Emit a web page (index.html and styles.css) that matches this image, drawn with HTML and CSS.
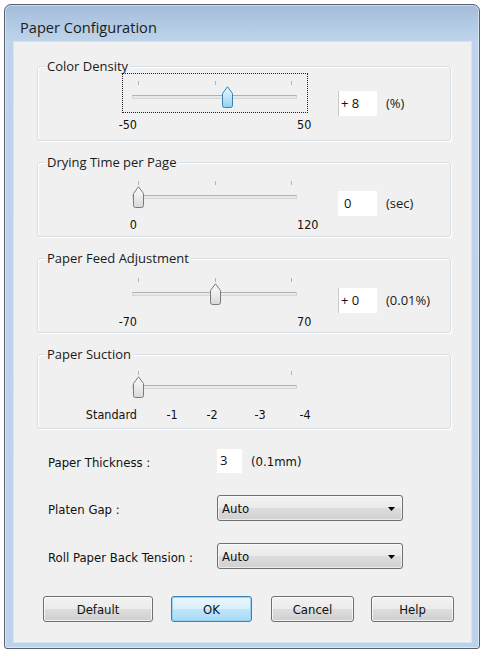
FILE: index.html
```html
<!DOCTYPE html>
<html>
<head>
<meta charset="utf-8">
<link rel="stylesheet" href="styles.css">
</head>
<body>
<div class="window">
  <div class="titlebar">Paper Configuration</div>
  <div class="client">

    <div class="group g1">
      <span class="legend">Color Density</span>
      <div class="row">
        <div class="slider-col">
          <div class="slider focus">
            <div class="ticks"><i></i><i></i><i></i></div>
            <div class="track"></div>
            <svg class="thumb" style="left:calc(15px + 0.58 * 153px - 5px)" width="11" height="22" viewBox="0 0 11 22">
              <defs><linearGradient id="tb1" x1="0" y1="0" x2="0" y2="1"><stop offset="0" stop-color="#e9f6fd"/><stop offset="0.5" stop-color="#bfe6fa"/><stop offset="1" stop-color="#8fd0f2"/></linearGradient></defs>
              <path d="M0.5 7.5 L5.5 0.8 L10.5 7.5 V19.5 Q10.5 21.5 8.5 21.5 H2.5 Q0.5 21.5 0.5 19.5 Z" fill="url(#tb1)" stroke="#3c7fb1"/>
            </svg>
          </div>
          <div class="scale"><span class="lo">-50</span><span class="hi">50</span></div>
        </div>
        <div class="edit signed">+ 8</div>
        <span class="unit">(%)</span>
      </div>
    </div>

    <div class="group g2">
      <span class="legend">Drying Time per Page</span>
      <div class="row">
        <div class="slider-col">
          <div class="slider">
            <div class="ticks"><i></i><i></i><i></i></div>
            <div class="track"></div>
            <svg class="thumb" style="left:calc(15px + 0 * 153px - 5px)" width="11" height="22" viewBox="0 0 11 22">
              <defs><linearGradient id="tb2" x1="0" y1="0" x2="0" y2="1"><stop offset="0" stop-color="#fafafa"/><stop offset="0.5" stop-color="#ececec"/><stop offset="1" stop-color="#d8d8d8"/></linearGradient></defs>
              <path d="M0.5 7.5 L5.5 0.8 L10.5 7.5 V19.5 Q10.5 21.5 8.5 21.5 H2.5 Q0.5 21.5 0.5 19.5 Z" fill="url(#tb2)" stroke="#7a7a7a"/>
            </svg>
          </div>
          <div class="scale"><span class="lo">0</span><span class="hi">120</span></div>
        </div>
        <div class="edit plain">0</div>
        <span class="unit">(sec)</span>
      </div>
    </div>

    <div class="group g3">
      <span class="legend">Paper Feed Adjustment</span>
      <div class="row">
        <div class="slider-col">
          <div class="slider">
            <div class="ticks"><i></i><i></i><i></i></div>
            <div class="track"></div>
            <svg class="thumb" style="left:calc(15px + 0.5 * 153px - 5px)" width="11" height="22" viewBox="0 0 11 22">
              <defs><linearGradient id="tb3" x1="0" y1="0" x2="0" y2="1"><stop offset="0" stop-color="#fafafa"/><stop offset="0.5" stop-color="#ececec"/><stop offset="1" stop-color="#d8d8d8"/></linearGradient></defs>
              <path d="M0.5 7.5 L5.5 0.8 L10.5 7.5 V19.5 Q10.5 21.5 8.5 21.5 H2.5 Q0.5 21.5 0.5 19.5 Z" fill="url(#tb3)" stroke="#7a7a7a"/>
            </svg>
          </div>
          <div class="scale"><span class="lo">-70</span><span class="hi">70</span></div>
        </div>
        <div class="edit signed">+ 0</div>
        <span class="unit">(0.01%)</span>
      </div>
    </div>

    <div class="group g4">
      <span class="legend">Paper Suction</span>
      <div class="row">
        <div class="slider-col">
          <div class="slider">
            <div class="ticks"><i></i><i></i></div>
            <div class="track"></div>
            <svg class="thumb" style="left:calc(15px + 0 * 153px - 5px)" width="11" height="22" viewBox="0 0 11 22">
              <defs><linearGradient id="tb4" x1="0" y1="0" x2="0" y2="1"><stop offset="0" stop-color="#fafafa"/><stop offset="0.5" stop-color="#ececec"/><stop offset="1" stop-color="#d8d8d8"/></linearGradient></defs>
              <path d="M0.5 7.5 L5.5 0.8 L10.5 7.5 V19.5 Q10.5 21.5 8.5 21.5 H2.5 Q0.5 21.5 0.5 19.5 Z" fill="url(#tb4)" stroke="#7a7a7a"/>
            </svg>
          </div>
          <div class="scale suction">
            <span class="std">Standard</span><span class="s1">-1</span><span class="s2">-2</span><span class="s3">-3</span><span class="s4">-4</span>
          </div>
        </div>
      </div>
    </div>

    <div class="field thick">
      <span class="flabel">Paper Thickness :</span>
      <div class="edit small">3</div>
      <span class="funit">(0.1mm)</span>
    </div>

    <div class="field combo-row first">
      <span class="flabel">Platen Gap :</span>
      <div class="combo"><span>Auto</span><svg width="7" height="4" viewBox="0 0 7 4"><path d="M0 0 H7 L3.5 4 Z" fill="#000"/></svg></div>
    </div>

    <div class="field combo-row">
      <span class="flabel">Roll Paper Back Tension :</span>
      <div class="combo"><span>Auto</span><svg width="7" height="4" viewBox="0 0 7 4"><path d="M0 0 H7 L3.5 4 Z" fill="#000"/></svg></div>
    </div>

    <div class="buttons">
      <div class="btn wide">Default</div>
      <div class="btn default">OK</div>
      <div class="btn cancel">Cancel</div>
      <div class="btn help">Help</div>
    </div>

  </div>
</div>
</body>
</html>
```

FILE: styles.css
```css
html, body {
  margin: 0;
  padding: 0;
  background: #ffffff;
}
body {
  width: 484px;
  height: 654px;
  overflow: hidden;
  font-family: "DejaVu Sans Condensed", "DejaVu Sans", sans-serif;
  font-stretch: condensed;
  font-size: 12px;
  color: #000;
}
.window {
  margin: 4px 0 0 4px;
  width: 476px;
  height: 645px;
  box-sizing: border-box;
  border: 1px solid #56606c;
  border-radius: 7px 7px 3px 3px;
  background: linear-gradient(#a3bcda 0px, #b3cae4 20px, #bed4ec 37px, #bcd3eb 100%);
  box-shadow: inset 0 0 0 1px rgba(255,255,255,0.45);
  padding: 0 8px 6px 9px;
  display: flex;
  flex-direction: column;
}
.titlebar {
  height: 37px;
  box-sizing: border-box;
  padding: 6px 0 0 6px;
  display: flex;
  align-items: center;
  font-family: "Open Sans", "Noto Sans", sans-serif;
  font-stretch: normal;
  font-size: 14.6px;
  color: #1b1b1b;
}
.client {
  flex: 1;
  background: #f0f0f0;
  box-shadow: 0 0 0 1px #d7e3f1;
  padding: 24px 20px 0 23px;
  display: flex;
  flex-direction: column;
}
.group {
  position: relative;
  height: 75px;
  box-sizing: border-box;
  border: 1px solid #d5dfe5;
  border-radius: 3px;
  box-shadow: inset 1px 1px 0 #ffffff, 1px 1px 0 #ffffff;
  margin-bottom: 21px;
}
.g1 { padding-top: 6px; }
.g2 { padding-top: 10px; }
.g3 { padding-top: 11px; }
.g4 { padding-top: 8px; margin-bottom: 0; }
.legend {
  position: absolute;
  top: -10px;
  left: 8px;
  padding: 0 2px 0 1px;
  background: #f0f0f0;
  font-family: "Open Sans", "Noto Sans", sans-serif;
  font-stretch: normal;
  font-size: 13px;
  line-height: 18px;
  color: #1a1a1a;
}
.row {
  display: flex;
  align-items: center;
  padding-left: 84px;
}
.slider-col {
  width: 186px;
  flex: none;
  display: flex;
  flex-direction: column;
}
.slider {
  position: relative;
  height: 40px;
  box-sizing: border-box;
  border: 1px solid transparent;
}
.slider.focus {
  border: 1px dotted #202020;
}
.ticks {
  margin: 7px 0 0 15px;
  width: 154px;
  height: 4px;
  display: flex;
  justify-content: space-between;
}
.ticks i {
  display: block;
  width: 1px;
  height: 4px;
  background: #b4b4b4;
}
.track {
  margin: 10px 0 0 9px;
  width: 165px;
  height: 4px;
  box-sizing: border-box;
  border: 1px solid #d6d6d6;
  border-top-color: #b0b0b0;
  background: #e7eaea;
}
.thumb {
  position: absolute;
  top: 12px;
  display: block;
}
.scale {
  margin-top: 4px;
  height: 16px;
  line-height: 16px;
  display: flex;
  font-size: 12.5px;
  color: #111;
}
.scale span {
  flex: none;
}
.scale .lo {
  width: 27px;
  margin-left: -12px;
  text-align: right;
}
.scale .hi {
  margin-left: 160px;
}
.scale.suction span {
  width: 20px;
  text-align: center;
}
.scale.suction .std {
  width: 60px;
  margin-left: -45px;
  text-align: right;
}
.scale.suction .s1 { margin-left: 25px; }
.scale.suction .s2 { margin-left: 20px; }
.scale.suction .s3 { margin-left: 28px; }
.scale.suction .s4 { margin-left: 25px; }
.edit {
  background: #ffffff;
  box-sizing: border-box;
  font-family: "Open Sans", "Noto Sans", sans-serif;
  font-stretch: normal;
  font-size: 13px;
  color: #111;
  flex: none;
}
.row .edit {
  width: 39px;
  height: 25px;
  line-height: 24px;
  margin-left: 30px;
}
.edit.signed {
  padding-left: 2px;
  border-left: 1px solid #c9c9c9;
}
.edit.plain {
  padding-left: 6px;
}
.unit {
  margin-left: 9px;
  font-family: "Open Sans", "Noto Sans", sans-serif;
  font-stretch: normal;
  font-size: 13px;
  color: #1a1a1a;
}
.field {
  display: flex;
  align-items: center;
  padding-left: 11px;
  font-size: 13px;
  color: #111;
}
.flabel {
  width: 169px;
  flex: none;
  padding-top: 3px;
}
.thick {
  margin-top: 20px;
}
.edit.small {
  width: 25px;
  height: 24px;
  line-height: 23px;
  padding-left: 3px;
}
.funit {
  margin-left: 9px;
}
.combo-row {
  margin-top: 22px;
}
.combo {
  width: 186px;
  height: 26px;
  box-sizing: border-box;
  border: 1px solid #707070;
  border-radius: 3px;
  background: linear-gradient(#f2f2f2 0%, #ebebeb 48%, #dddddd 52%, #cfcfcf 100%);
  box-shadow: inset 0 0 0 1px rgba(255,255,255,0.6);
  display: flex;
  align-items: center;
  justify-content: space-between;
  padding: 1px 7px 0 4px;
}
.combo svg {
  display: block;
}
.buttons {
  margin-top: 27px;
  padding-left: 6px;
  display: flex;
}
.btn {
  width: 83px;
  height: 26px;
  flex: none;
  box-sizing: border-box;
  border: 1px solid #707070;
  border-radius: 3px;
  background: linear-gradient(#f2f2f2 0%, #ebebeb 48%, #dddddd 52%, #cfcfcf 100%);
  box-shadow: inset 0 0 0 1px rgba(255,255,255,0.7);
  display: flex;
  align-items: center;
  justify-content: center;
  font-size: 13px;
  color: #111;
}
.btn.wide {
  width: 110px;
}
.btn.default {
  width: 81px;
  margin-left: 18px;
  border-color: #3c7fb1;
  background: linear-gradient(#eaf6fd 0%, #d9f0fc 48%, #bee6fd 52%, #a7d9f5 100%);
  box-shadow: inset 0 0 0 1px #97d3f3;
}
.btn.cancel {
  margin-left: 19px;
}
.btn.help {
  margin-left: 17px;
}
```
